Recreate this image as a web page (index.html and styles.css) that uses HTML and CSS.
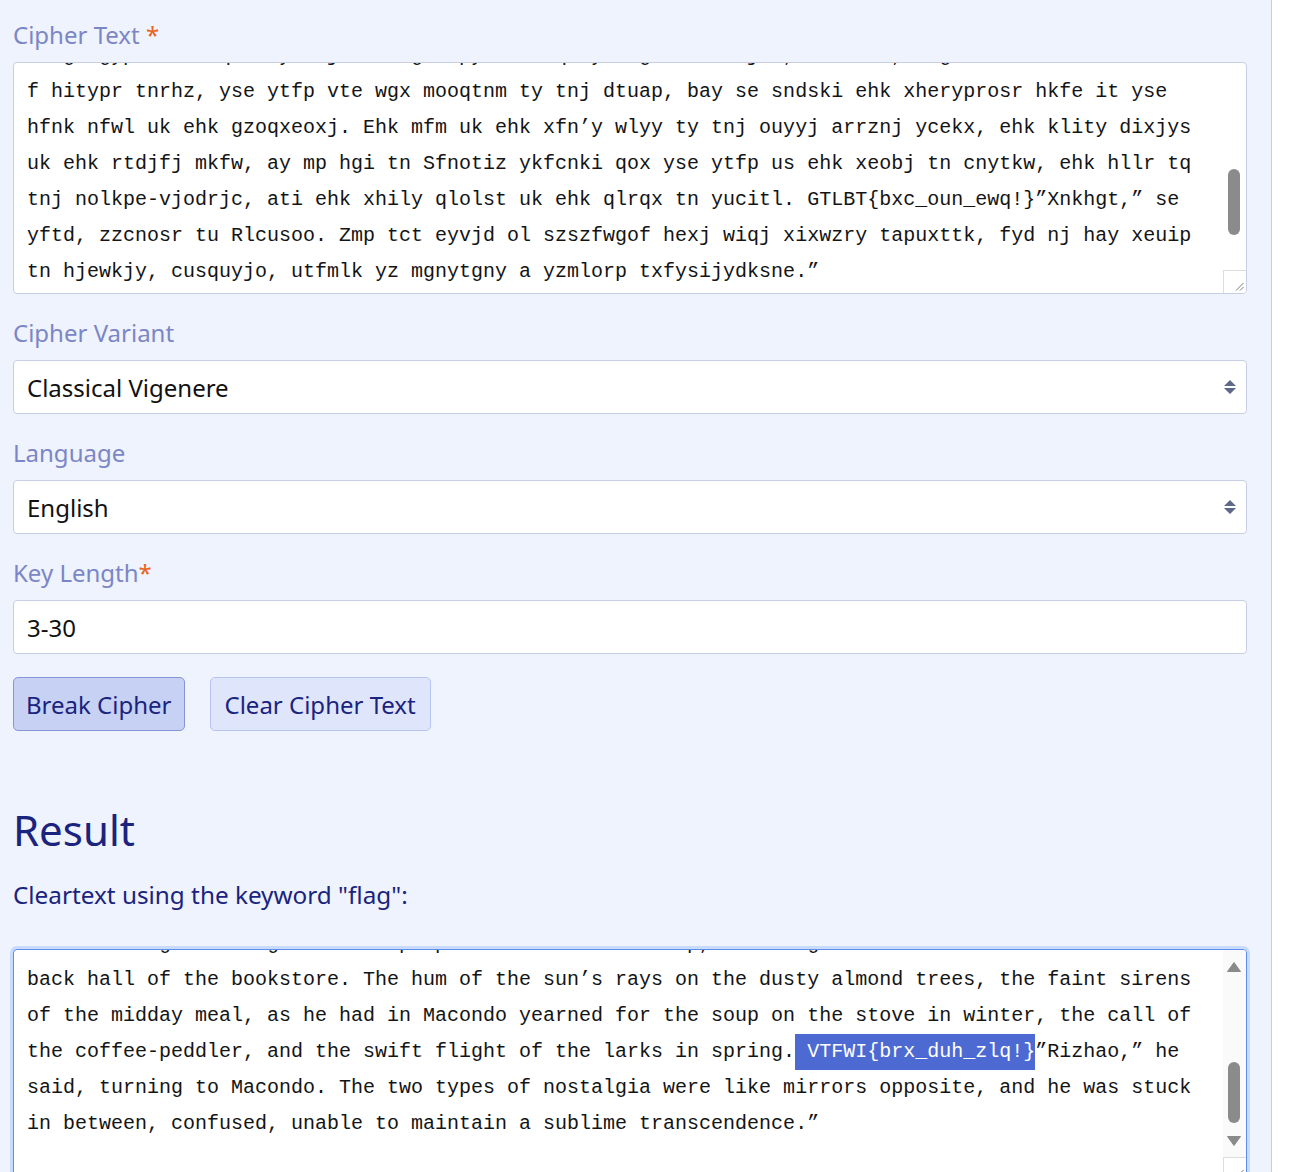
FILE: index.html
```html
<!DOCTYPE html>
<html lang="en">
<head>
<meta charset="utf-8">
<title>Vigenere Cipher Breaker</title>
<link rel="stylesheet" href="styles.css">
</head>
<body>
<main class="panel">
  <form class="form">
    <div class="group">
      <label class="label">Cipher Text <span class="req">*</span></label>
      <div class="textbox">
        <div class="textbox-scroll" data-scroll="31"><div class="textbox-text">wheg agypr tmevrqith yem jeotn agee pythere qteyoelgekic ehkjrn, alwadoe, angx rhekamrwek itazdl
f hitypr tnrhz, yse ytfp vte wgx mooqtnm ty tnj dtuap, bay se sndski ehk xheryprosr hkfe it yse
hfnk nfwl uk ehk gzoqxeoxj. Ehk mfm uk ehk xfn’y wlyy ty tnj ouyyj arrznj ycekx, ehk klity dixjys
uk ehk rtdjfj mkfw, ay mp hgi tn Sfnotiz ykfcnki qox yse ytfp us ehk xeobj tn cnytkw, ehk hllr tq
tnj nolkpe-vjodrjc, ati ehk xhily qlolst uk ehk qlrqx tn yucitl. <span class="flag">GTLBT{bxc_oun_ewq!}</span>”Xnkhgt,” se
yftd, zzcnosr tu Rlcusoo. Zmp tct eyvjd ol szszfwgof hexj wiqj xixwzry tapuxttk, fyd nj hay xeuip
tn hjewkjy, cusquyjo, utfmlk yz mgnytgny a yzmlorp txfysijydksne.”</div></div>
        <div class="scrollbar scrollbar-idle"><span class="thumb thumb-top"></span></div>
        <div class="grip"><svg width="9" height="9" viewBox="0 0 9 9"><path d="M8.5 1 L1 8.5 M8.5 5 L5 8.5" stroke="#7a7a7a" stroke-width="1"/></svg></div>
      </div>
    </div>

    <div class="group">
      <label class="label">Cipher Variant</label>
      <div class="select">
        <span>Classical Vigenere</span>
        <svg class="select-arrows" width="12" height="14" viewBox="0 0 12 14"><path d="M6 0 L12 6 H0 Z M6 14 L12 8 H0 Z" fill="#5e6888"/></svg>
      </div>
    </div>

    <div class="group">
      <label class="label">Language</label>
      <div class="select">
        <span>English</span>
        <svg class="select-arrows" width="12" height="14" viewBox="0 0 12 14"><path d="M6 0 L12 6 H0 Z M6 14 L12 8 H0 Z" fill="#5e6888"/></svg>
      </div>
    </div>

    <div class="group">
      <label class="label">Key Length<span class="req">*</span></label>
      <div class="input">3-30</div>
    </div>

    <div class="actions">
      <button type="button" class="btn btn-primary">Break Cipher</button>
      <button type="button" class="btn btn-secondary">Clear Cipher Text</button>
    </div>
  </form>

  <section class="result">
    <h2 class="result-title">Result</h2>
    <p class="result-sub">Cleartext using the keyword "flag":</p>
    <div class="textbox textbox-focus">
      <div class="textbox-scroll" data-scroll="30"><div class="textbox-text">that evening he thought of the people at the coffee shop, the long conversations in the
back hall of the bookstore. The hum of the sun’s rays on the dusty almond trees, the faint sirens
of the midday meal, as he had in Macondo yearned for the soup on the stove in winter, the call of
the coffee-peddler, and the swift flight of the larks in spring.<span class="mark"> VTFWI{brx_duh_zlq!}</span>”Rizhao,” he
said, turning to Macondo. The two types of nostalgia were like mirrors opposite, and he was stuck
in between, confused, unable to maintain a sublime transcendence.”</div></div>
      <div class="scrollbar scrollbar-active">
        <svg class="arrow arrow-up" width="14" height="10" viewBox="0 0 14 10"><path d="M7 0.5 L13.5 9.5 H0.5 Z" fill="#8a8a8a" stroke="#8a8a8a" stroke-linejoin="round"/></svg>
        <span class="thumb thumb-bottom"></span>
        <svg class="arrow arrow-down" width="14" height="10" viewBox="0 0 14 10"><path d="M7 9.5 L13.5 0.5 H0.5 Z" fill="#8a8a8a" stroke="#8a8a8a" stroke-linejoin="round"/></svg>
      </div>
      <div class="grip"><svg width="9" height="9" viewBox="0 0 9 9"><path d="M8.5 1 L1 8.5 M8.5 5 L5 8.5" stroke="#7a7a7a" stroke-width="1"/></svg></div>
    </div>
  </section>
</main>
<script src="script.js"></script>
</body>
</html>
```

FILE: styles.css
```css
html, body {
  margin: 0;
  padding: 0;
  background: #ffffff;
}

body {
  font-family: "Noto Sans", "Open Sans", sans-serif;
}

.panel {
  box-sizing: border-box;
  width: 1272px;
  min-height: 100vh;
  background: #eef3fd;
  border-right: 1px solid #c4cdf1;
  padding: 17px 24px 40px 13px;
}

.form {
  margin: 0;
}

.group {
  margin-bottom: 21px;
}

.label {
  display: block;
  font-size: 24px;
  line-height: 36px;
  color: #7c86c6;
  margin-bottom: 9px;
}

.req {
  color: #ea6320;
}

.textbox {
  position: relative;
  box-sizing: border-box;
  height: 232px;
  background: #ffffff;
  border: 1px solid #c9cee2;
  border-radius: 4px;
  overflow: hidden;
}

.textbox-scroll {
  box-sizing: border-box;
  height: 100%;
  overflow: hidden;
  padding: 6px 0 80px 13px;
}

.textbox-text {
  font-family: "Liberation Mono", "DejaVu Sans Mono", monospace;
  font-size: 20px;
  line-height: 36px;
  color: #141414;
  white-space: pre;
  padding-bottom: 80px;
}

.mark {
  display: inline-block;
  height: 36px;
  vertical-align: top;
  background: #4d69d2;
  color: #ffffff;
}

.scrollbar {
  position: absolute;
  top: 0;
  right: 0;
  bottom: 0;
  width: 23px;
}

.scrollbar-active {
  background: #fafafa;
}

.thumb {
  position: absolute;
  left: 5px;
  width: 12px;
  border-radius: 6px;
  background: #8b8b8b;
}

.thumb-top {
  top: 106px;
  height: 66px;
}

.thumb-bottom {
  top: 112px;
  height: 61px;
}

.arrow {
  position: absolute;
  left: 4px;
}

.arrow-up {
  top: 12px;
}

.arrow-down {
  top: 186px;
}

.grip {
  position: absolute;
  right: 0;
  bottom: 0;
  box-sizing: border-box;
  width: 23px;
  height: 23px;
  background: #ffffff;
  border-top: 1px solid #dcdcdc;
  border-left: 1px solid #dcdcdc;
  display: flex;
  align-items: flex-end;
  justify-content: flex-end;
  padding: 0 2px 2px 0;
}

.grip svg {
  display: block;
}

.textbox-focus {
  border-color: #5d8ded;
  box-shadow: 0 0 0 3px #c9dbfb;
}

.select,
.input {
  box-sizing: border-box;
  height: 54px;
  display: flex;
  align-items: center;
  justify-content: space-between;
  padding: 0 10px 0 13px;
  background: #ffffff;
  border: 1px solid #c9cee2;
  border-radius: 4px;
  font-size: 24px;
  color: #111111;
}

.select-arrows {
  display: block;
}

.actions {
  display: flex;
  gap: 25px;
  margin-top: 23px;
}

.btn {
  box-sizing: border-box;
  height: 54px;
  padding: 0 12px;
  border-radius: 5px;
  font-family: "Noto Sans", "Open Sans", sans-serif;
  font-size: 24px;
  color: #1a237e;
  cursor: pointer;
}

.btn-primary {
  background: #c6d1f3;
  border: 1px solid #8595d6;
}

.btn-secondary {
  background: #dfe6fb;
  border: 1px solid #b7c4f0;
  padding: 0 14px;
}

.result {
  margin-top: 72px;
}

.result-title {
  margin: 0;
  font-size: 42px;
  line-height: 53px;
  font-weight: 400;
  color: #1a237e;
}

.result-sub {
  margin: 21px 0 36px;
  font-size: 24.3px;
  line-height: 36px;
  color: #1a237e;
}
```

FILE: script.js
```js
document.querySelectorAll('[data-scroll]').forEach(function (el) {
  el.scrollTop = Number(el.dataset.scroll);
});
```
